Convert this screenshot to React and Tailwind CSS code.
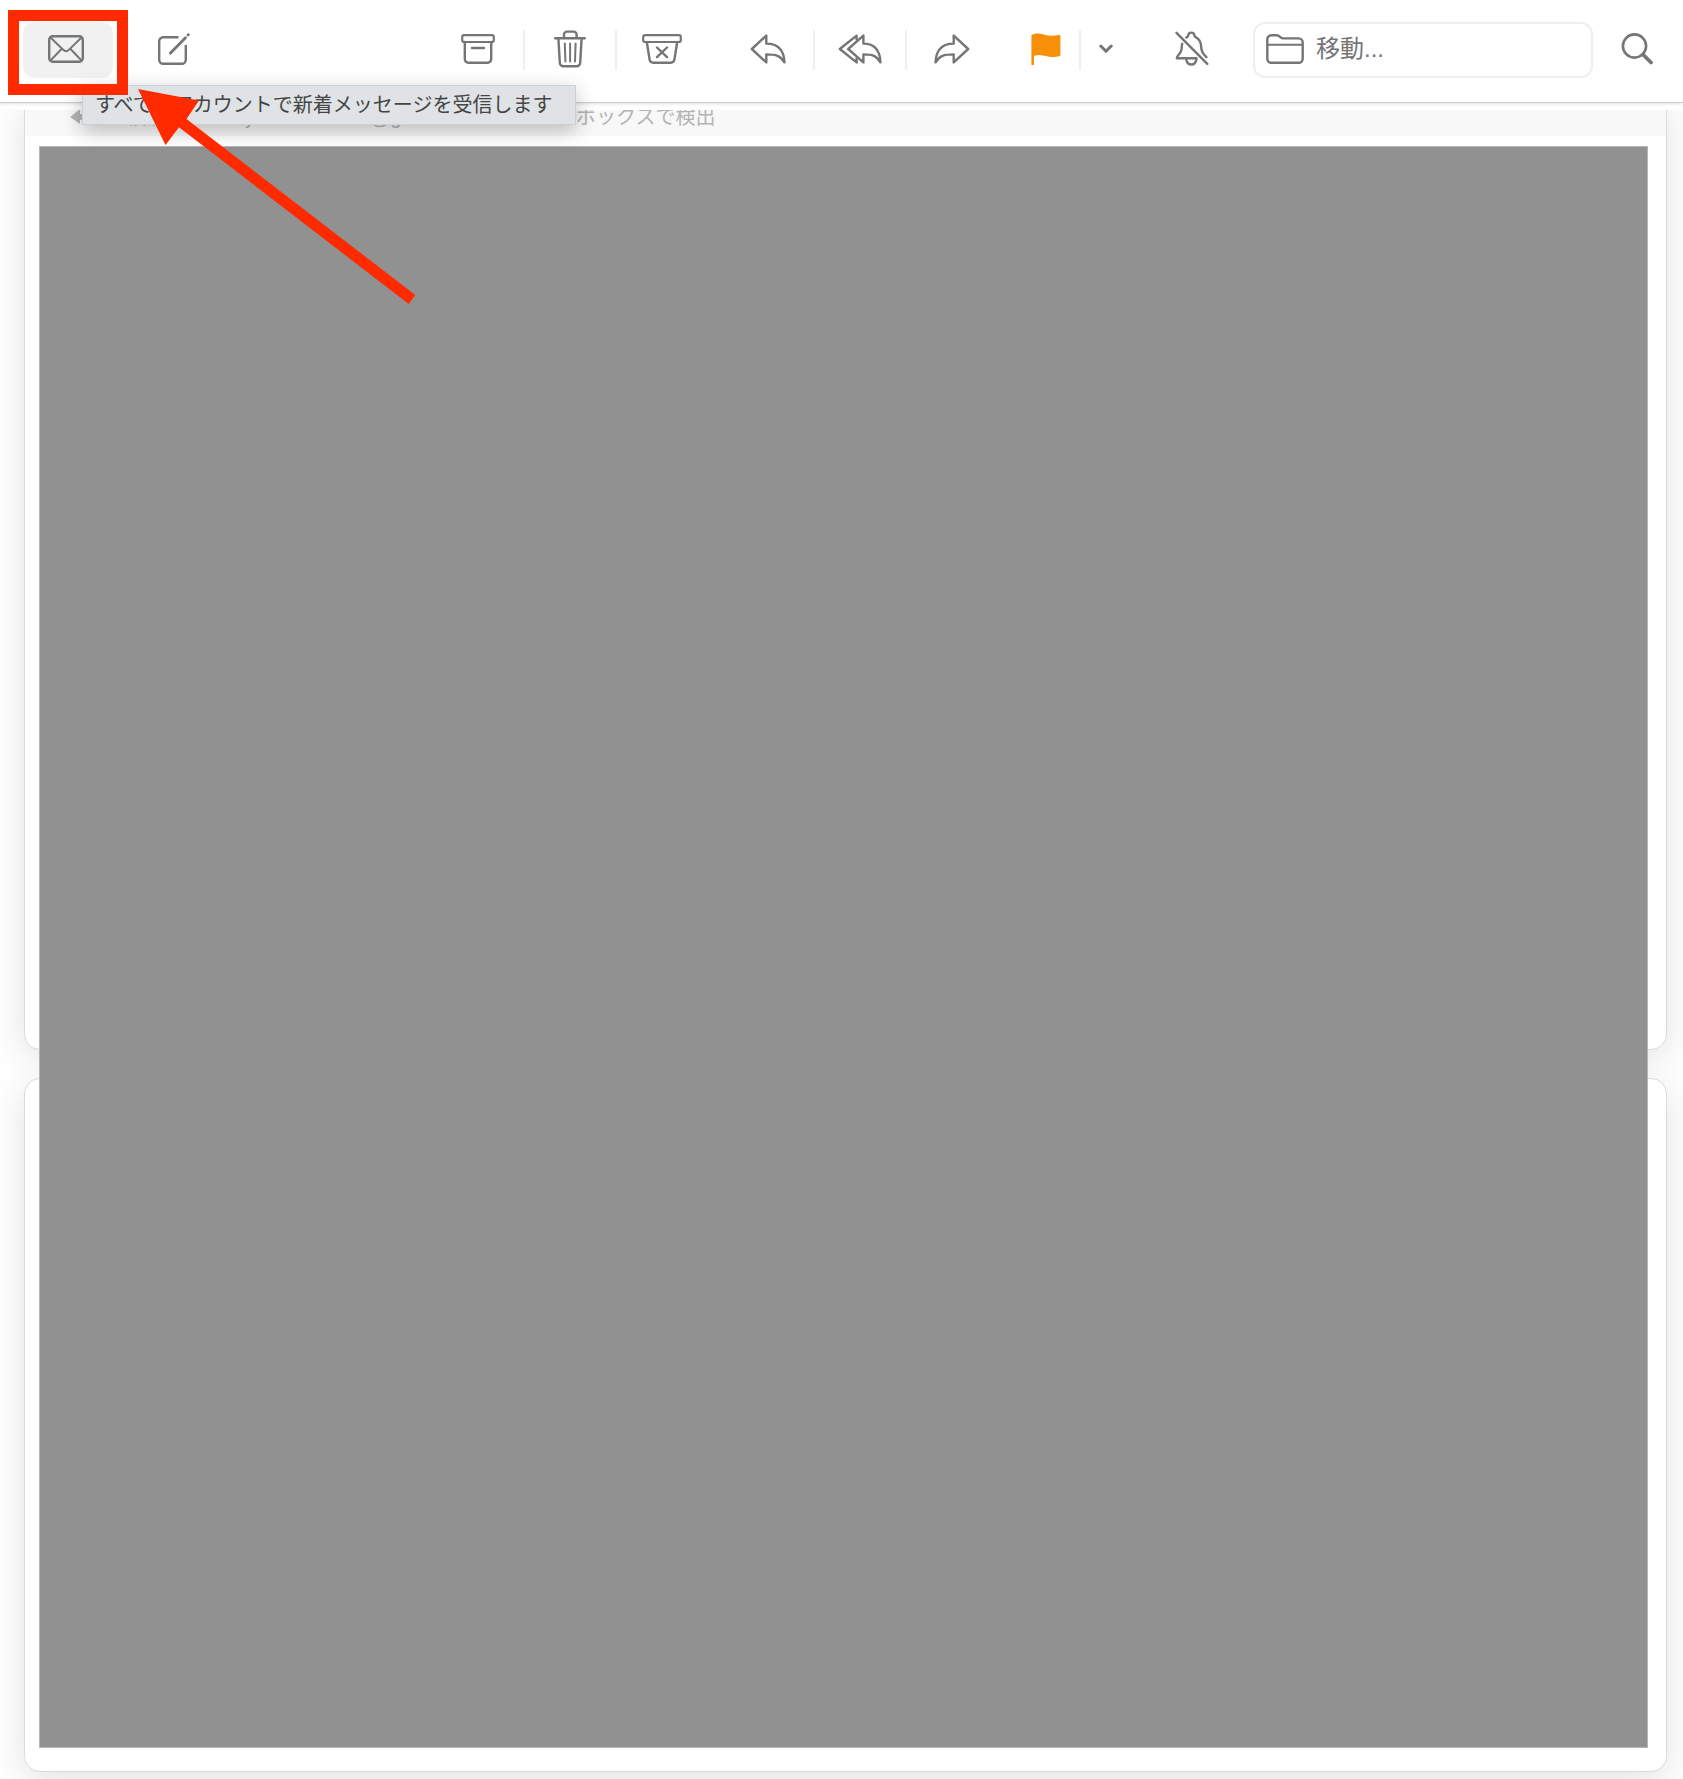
import React from "react";

const Icon = ({ width, height, children }) => (
  <svg
    width={width}
    height={height}
    viewBox={`0 0 ${width} ${height}`}
    fill="none"
    stroke="#757575"
    strokeWidth="2.4"
    strokeLinecap="round"
    strokeLinejoin="round"
    className="shrink-0"
    aria-hidden="true"
  >
    {children}
  </svg>
);

const MailIcon = () => (
  <Icon width={36} height={28}>
    <rect x="1.2" y="1.2" width="33.6" height="25.6" rx="3.5" strokeWidth="2.4" />
    <path
      d="M2.5 2.5 15.2 14.8Q18 17.6 20.8 14.8L33.5 2.5M2.5 25.5 13 14.5M33.5 25.5 23 14.5"
      strokeWidth="1.9"
    />
  </Icon>
);

const ComposeIcon = () => (
  <Icon width={32} height={32}>
    <path
      d="M20.5 4.2H5.2a4 4 0 0 0-4 4v18.6a4 4 0 0 0 4 4h18.6a4 4 0 0 0 4-4V12"
      strokeLinecap="butt"
      strokeWidth="2.4"
    />
    <path d="M12.5 20 27.5 4.8" strokeWidth="2.8" />
    <path d="M12 20.6 14.4 18" strokeWidth="1.6" />
    <circle cx="30.2" cy="1.8" r="1.6" fill="#757575" stroke="none" />
  </Icon>
);

const ArchiveIcon = () => (
  <Icon width={34} height={30}>
    <rect x="1.2" y="1.2" width="31.6" height="6.8" rx="2" strokeWidth="2.2" />
    <path d="M3.8 8v17a3.6 3.6 0 0 0 3.6 3.7h19.2a3.6 3.6 0 0 0 3.6-3.7V8M11 14h12" />
  </Icon>
);

const TrashIcon = () => (
  <Icon width={32} height={38}>
    <path d="M1.2 8.3h29.6M10 8V4.600a3 3 0 0 1 3-3h6.600a3 3 0 0 1 3 3V8" />
    <path d="M4.4 8.6 5.8 32.4a3.6 3.6 0 0 0 3.6 3.8h13.2a3.6 3.6 0 0 0 3.6-3.8L27.6 8.6" />
    <path d="M10.8 13.5 11.4 31.5M16.1 13.5v18M21.6 13.5 21 31.5" strokeWidth="2" />
  </Icon>
);

const JunkIcon = () => (
  <Icon width={40} height={30}>
    <rect x="1.2" y="1.2" width="37.6" height="6.8" rx="2" strokeWidth="2.2" />
    <path d="M4.8 8 7.6 25.6a3.8 3.8 0 0 0 3.8 3.1h17.2a3.8 3.8 0 0 0 3.8-3.1L35.2 8" />
    <path d="m15 13.5 10 9.6M25 13.5l-10 9.6" strokeWidth="2.4" />
  </Icon>
);

const ReplyIcon = () => (
  <Icon width={36} height={30}>
    <path d="M16.3 1.6v8C28 9.6 34 16 34.4 28.4 30.5 21.5 26 20.4 16.3 20.4v8L1.8 15Z" />
  </Icon>
);

const ReplyAllIcon = () => (
  <Icon width={44} height={30}>
    <path d="M18.6 5.5V1.6L1.8 15l16.8 13.4v-4" />
    <path d="M25.4 1.6v8C36.4 9.6 42 16 42.4 28.4 38.5 21.5 34.6 20.4 25.4 20.4v8L10.2 15Z" />
  </Icon>
);

const ForwardIcon = () => (
  <Icon width={36} height={30}>
    <path d="M19.7 1.6v8C8 9.6 2 16 1.6 28.4 5.5 21.5 10 20.4 19.7 20.4v8L34.2 15Z" />
  </Icon>
);

const FlagIcon = () => (
  <Icon width={30} height={32}>
    <path
      d="M.4 2.2C3 .3 7-.2 12 1.2c5.5 1.5 9.5 2.2 15.5.9 1.2-.2 1.9.2 1.9 1.2v18.2c0 1-.5 1.5-1.4 1.8-5 1.6-9.5.5-14.500-.6-4.500-1-7.500-.9-10.500.2v8.300a1.300 1.300 0 0 1-2.600 0Z"
      fill="#f78f08"
      stroke="none"
    />
  </Icon>
);

const ChevronIcon = () => (
  <Icon width={14} height={10}>
    <path d="m1.8 2 5.2 5.3L12.200 2" strokeWidth="3" />
  </Icon>
);

const BellOffIcon = () => (
  <Icon width={34} height={36}>
    <path d="M11.2 6.5c1-.9 1.8-.6 1.8-1.5.3-2.3 1.5-3.4 3.3-3.400s3 1.100 3.300 3.400c.1.600.5.800 1.100 1.100 3.800 2 5.500 5.400 5.500 10 0 4.500 1.800 7 5.300 10.200M7.200 12.800C6.500 15 7.200 18.500 5.500 21.300 4 23.700 1.800 25.500 1.800 27.300h19.700" />
    <path d="M11.3 28.5c.4 3.4 2.2 5 5 5s4.600-1.600 5-5M1.500 1.800 32.300 32.800" />
  </Icon>
);

const FolderIcon = () => (
  <Icon width={38} height={30}>
    <path d="M1.3 5.200a4 4 0 0 1 4-4h5.200c3.500 0 3.500 3.200 7 3.200h15.200a4 4 0 0 1 4 4v16.400a4 4 0 0 1-4 4H5.300a4 4 0 0 1-4-4Z" />
    <path d="M2 10.8h34" strokeWidth="2" />
  </Icon>
);

const SearchIcon = () => (
  <Icon width={32} height={32}>
    <circle cx="13.5" cy="13" r="11.6" strokeWidth="2.6" />
    <path d="m22 21.5 8 8" strokeWidth="3.8" />
  </Icon>
);

const ToolButton = ({ label, className = "w-[90px]", children }) => (
  <button
    type="button"
    aria-label={label}
    className={`flex h-14 shrink-0 items-center justify-center rounded-xl pb-[2px] ${className}`}
  >
    {children}
  </button>
);

const Divider = () => <span className="h-10 w-[2px] shrink-0 bg-[#efefef]" />;

const Toolbar = () => (
  <header className="flex items-center gap-4 border-b border-[#cfcfcf] bg-white pt-[22px] pr-[18px] pb-6 pl-[23px] shadow-[0_1px_3px_rgba(0,0,0,0.12)]">
    <div className="relative">
      <ToolButton label="受信" className="w-[90px] bg-[#f1f1f1] pr-1">
        <MailIcon />
      </ToolButton>
      {/* highlight frame */}
      <span className="pointer-events-none absolute -top-3 -right-[15px] -bottom-[17px] -left-[15px] z-20 border-[11px] border-[#ff2a00]" />
    </div>
    <ToolButton label="新規メッセージ">
      <ComposeIcon />
    </ToolButton>

    <div className="ml-auto flex items-center">
      <ToolButton label="アーカイブ">
        <ArchiveIcon />
      </ToolButton>
      <Divider />
      <ToolButton label="削除">
        <TrashIcon />
      </ToolButton>
      <Divider />
      <ToolButton label="迷惑メール">
        <JunkIcon />
      </ToolButton>
    </div>

    <div className="flex items-center">
      <ToolButton label="返信">
        <ReplyIcon />
      </ToolButton>
      <Divider />
      <ToolButton label="全員に返信">
        <ReplyAllIcon />
      </ToolButton>
      <Divider />
      <ToolButton label="転送">
        <ForwardIcon />
      </ToolButton>
    </div>

    <div className="flex items-center">
      <ToolButton label="フラグ" className="w-[66px]">
        <FlagIcon />
      </ToolButton>
      <Divider />
      <ToolButton label="フラグの色" className="w-[50px]">
        <ChevronIcon />
      </ToolButton>
    </div>

    <ToolButton label="通知を停止">
      <BellOffIcon />
    </ToolButton>

    <label className="flex h-14 w-[340px] items-center gap-3 rounded-xl border-2 border-[#efefef] pr-3 pb-[2px] pl-[11px]">
      <FolderIcon />
      <input
        type="text"
        aria-label="移動"
        placeholder="移動..."
        className="min-w-0 flex-1 bg-transparent text-2xl text-[#757575] outline-none placeholder:text-[#757575]"
      />
    </label>

    <ToolButton label="検索" className="w-14">
      <SearchIcon />
    </ToolButton>
  </header>
);

const MessageCard = ({ className, children }) => (
  <article
    className={`overflow-hidden rounded-2xl border border-[#dcdcdc] bg-white shadow-[0_8px_36px_rgba(0,0,0,0.12)] ${className}`}
  >
    {children}
  </article>
);

export default function App() {
  return (
    <div
      lang="ja"
      className="relative min-h-screen bg-white font-['Liberation_Sans','Noto_Sans_CJK_JP',sans-serif]"
    >
      <Toolbar />

      <main className="mt-[7px] overflow-hidden pr-4 pb-[7px] pl-6">
        <div className="relative -mt-4 flex flex-col gap-7">
          <MessageCard className="h-[956px]">
            <p className="flex h-[41px] items-center bg-[#f8f8f8] pt-[2px] pl-11 text-xl leading-6 text-[#b4b4b4]">
              <svg width="22" height="18" viewBox="0 0 22 18" className="mr-4" aria-hidden="true">
                <path d="M1 9 11 1v5c6 0 9 4 10 10-3-4-6-5-10-4v4Z" fill="#b4b4b4" />
              </svg>
              <span className="w-[138px]">送信済み</span>
              <span className="w-[125px]">y</span>
              <span className="w-[206px]">@g</span>
              <span>ボックスで検出</span>
            </p>
          </MessageCard>
          <MessageCard className="h-[694px]" />
          {/* redacted message bodies */}
          <div className="absolute top-[52px] right-[19px] bottom-6 left-[15px] border border-[#b5b5b5] bg-[#919191]" />
        </div>
      </main>

      <div
        role="tooltip"
        className="absolute top-[85px] left-[82px] z-10 w-[494px] border border-[#cdd0d3] bg-[#dfe3e6] py-1 pl-3 text-xl leading-[30px] whitespace-nowrap text-[#444444] shadow-[0_6px_20px_rgba(0,0,0,0.25)]"
      >
        すべてのアカウントで新着メッセージを受信します
      </div>

      <svg
        width="278"
        height="216"
        viewBox="0 0 278 216"
        className="pointer-events-none absolute top-[89px] left-[138px] z-30"
        aria-hidden="true"
      >
        <path d="M0 0 61 11.5 48.5 30 277.3 206 270.7 215 41 38.3 27.5 56Z" fill="#ff2a00" />
      </svg>
    </div>
  );
}
